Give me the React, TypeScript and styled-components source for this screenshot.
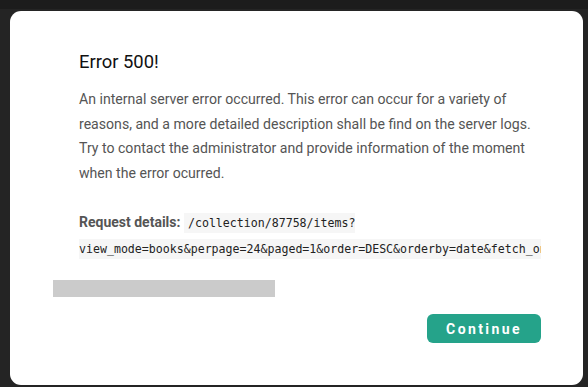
import React from "react";
import styled, { createGlobalStyle } from "styled-components";

// 요청 실패 시 띄우는 에러 모달

const GlobalStyle = createGlobalStyle`
  html, body {
    margin: 0;
    padding: 0;
    background-color: #222222;
  }
  * {
    box-sizing: border-box;
  }
`;

const requestPath =
  "/collection/87758/items?view_mode=books&perpage=24&paged=1&order=DESC&orderby=date&fetch_only=thumbnail";

export default function App() {
  return (
    <>
      <GlobalStyle />
      <Backdrop>
        <ModalWrap role="dialog">
          <ModalBody>
            <h2 className="title">Error 500!</h2>
            <p className="description">
              An internal server error occurred. This error can occur for a
              variety of reasons, and a more detailed description shall be find
              on the server logs. Try to contact the administrator and provide
              information of the moment when the error ocurred.
            </p>
            <p className="details">
              <strong>Request details:</strong> <code>{requestPath}</code>
            </p>
          </ModalBody>
          <LoadingBar />
          <ModalFooter>
            <ContinueBtn>Continue</ContinueBtn>
          </ModalFooter>
        </ModalWrap>
      </Backdrop>
    </>
  );
}

const Backdrop = styled.div`
  width: 588px;
  height: 387px;
  padding: 11px 5px 2px 10px;
  background: linear-gradient(#1c1c1c 0, #1c1c1c 9px, #242424 9px);
  display: flex;
`;

const ModalWrap = styled.div`
  flex: 1;
  background-color: #ffffff;
  border-radius: 11px;
  display: flex;
  flex-direction: column;
  overflow: hidden;
`;

const ModalBody = styled.div`
  padding: 39px 42px 0 69px;
  font-family: Roboto, "Liberation Sans", sans-serif;

  .title {
    margin: 0 0 13px;
    color: #111111;
    font-size: 18.4px;
    font-weight: 400;
    line-height: 24px;
  }

  .description {
    margin: 0;
    color: #555555;
    font-size: 14.1px;
    line-height: 24.6px;
  }

  .details {
    margin: 25px 0 0;
    color: #555555;
    font-size: 14px;
    line-height: 25px;
    overflow: hidden;
  }

  strong {
    font-weight: 700;
  }

  code {
    font-family: "DejaVu Sans Mono", "Liberation Mono", monospace;
    font-size: 11.6px;
    color: #222222;
    background-color: #f6f6f6;
    padding: 3px 4px;
    white-space: pre-wrap;
    word-break: keep-all;
  }
`;

const LoadingBar = styled.div`
  width: 222px;
  height: 17px;
  margin: 18px 0 0 43px;
  background-color: #cbcbcb;
`;

const ModalFooter = styled.div`
  display: flex;
  justify-content: flex-end;
  padding: 17px 42px 0 0;
`;

const ContinueBtn = styled.button`
  width: 114px;
  height: 29px;
  border: none;
  border-radius: 6px;
  background-color: #25a38a;
  color: #ffffff;
  font-family: Roboto, "Liberation Sans", sans-serif;
  font-size: 14px;
  font-weight: 700;
  letter-spacing: 2.4px;
  cursor: pointer;
`;
